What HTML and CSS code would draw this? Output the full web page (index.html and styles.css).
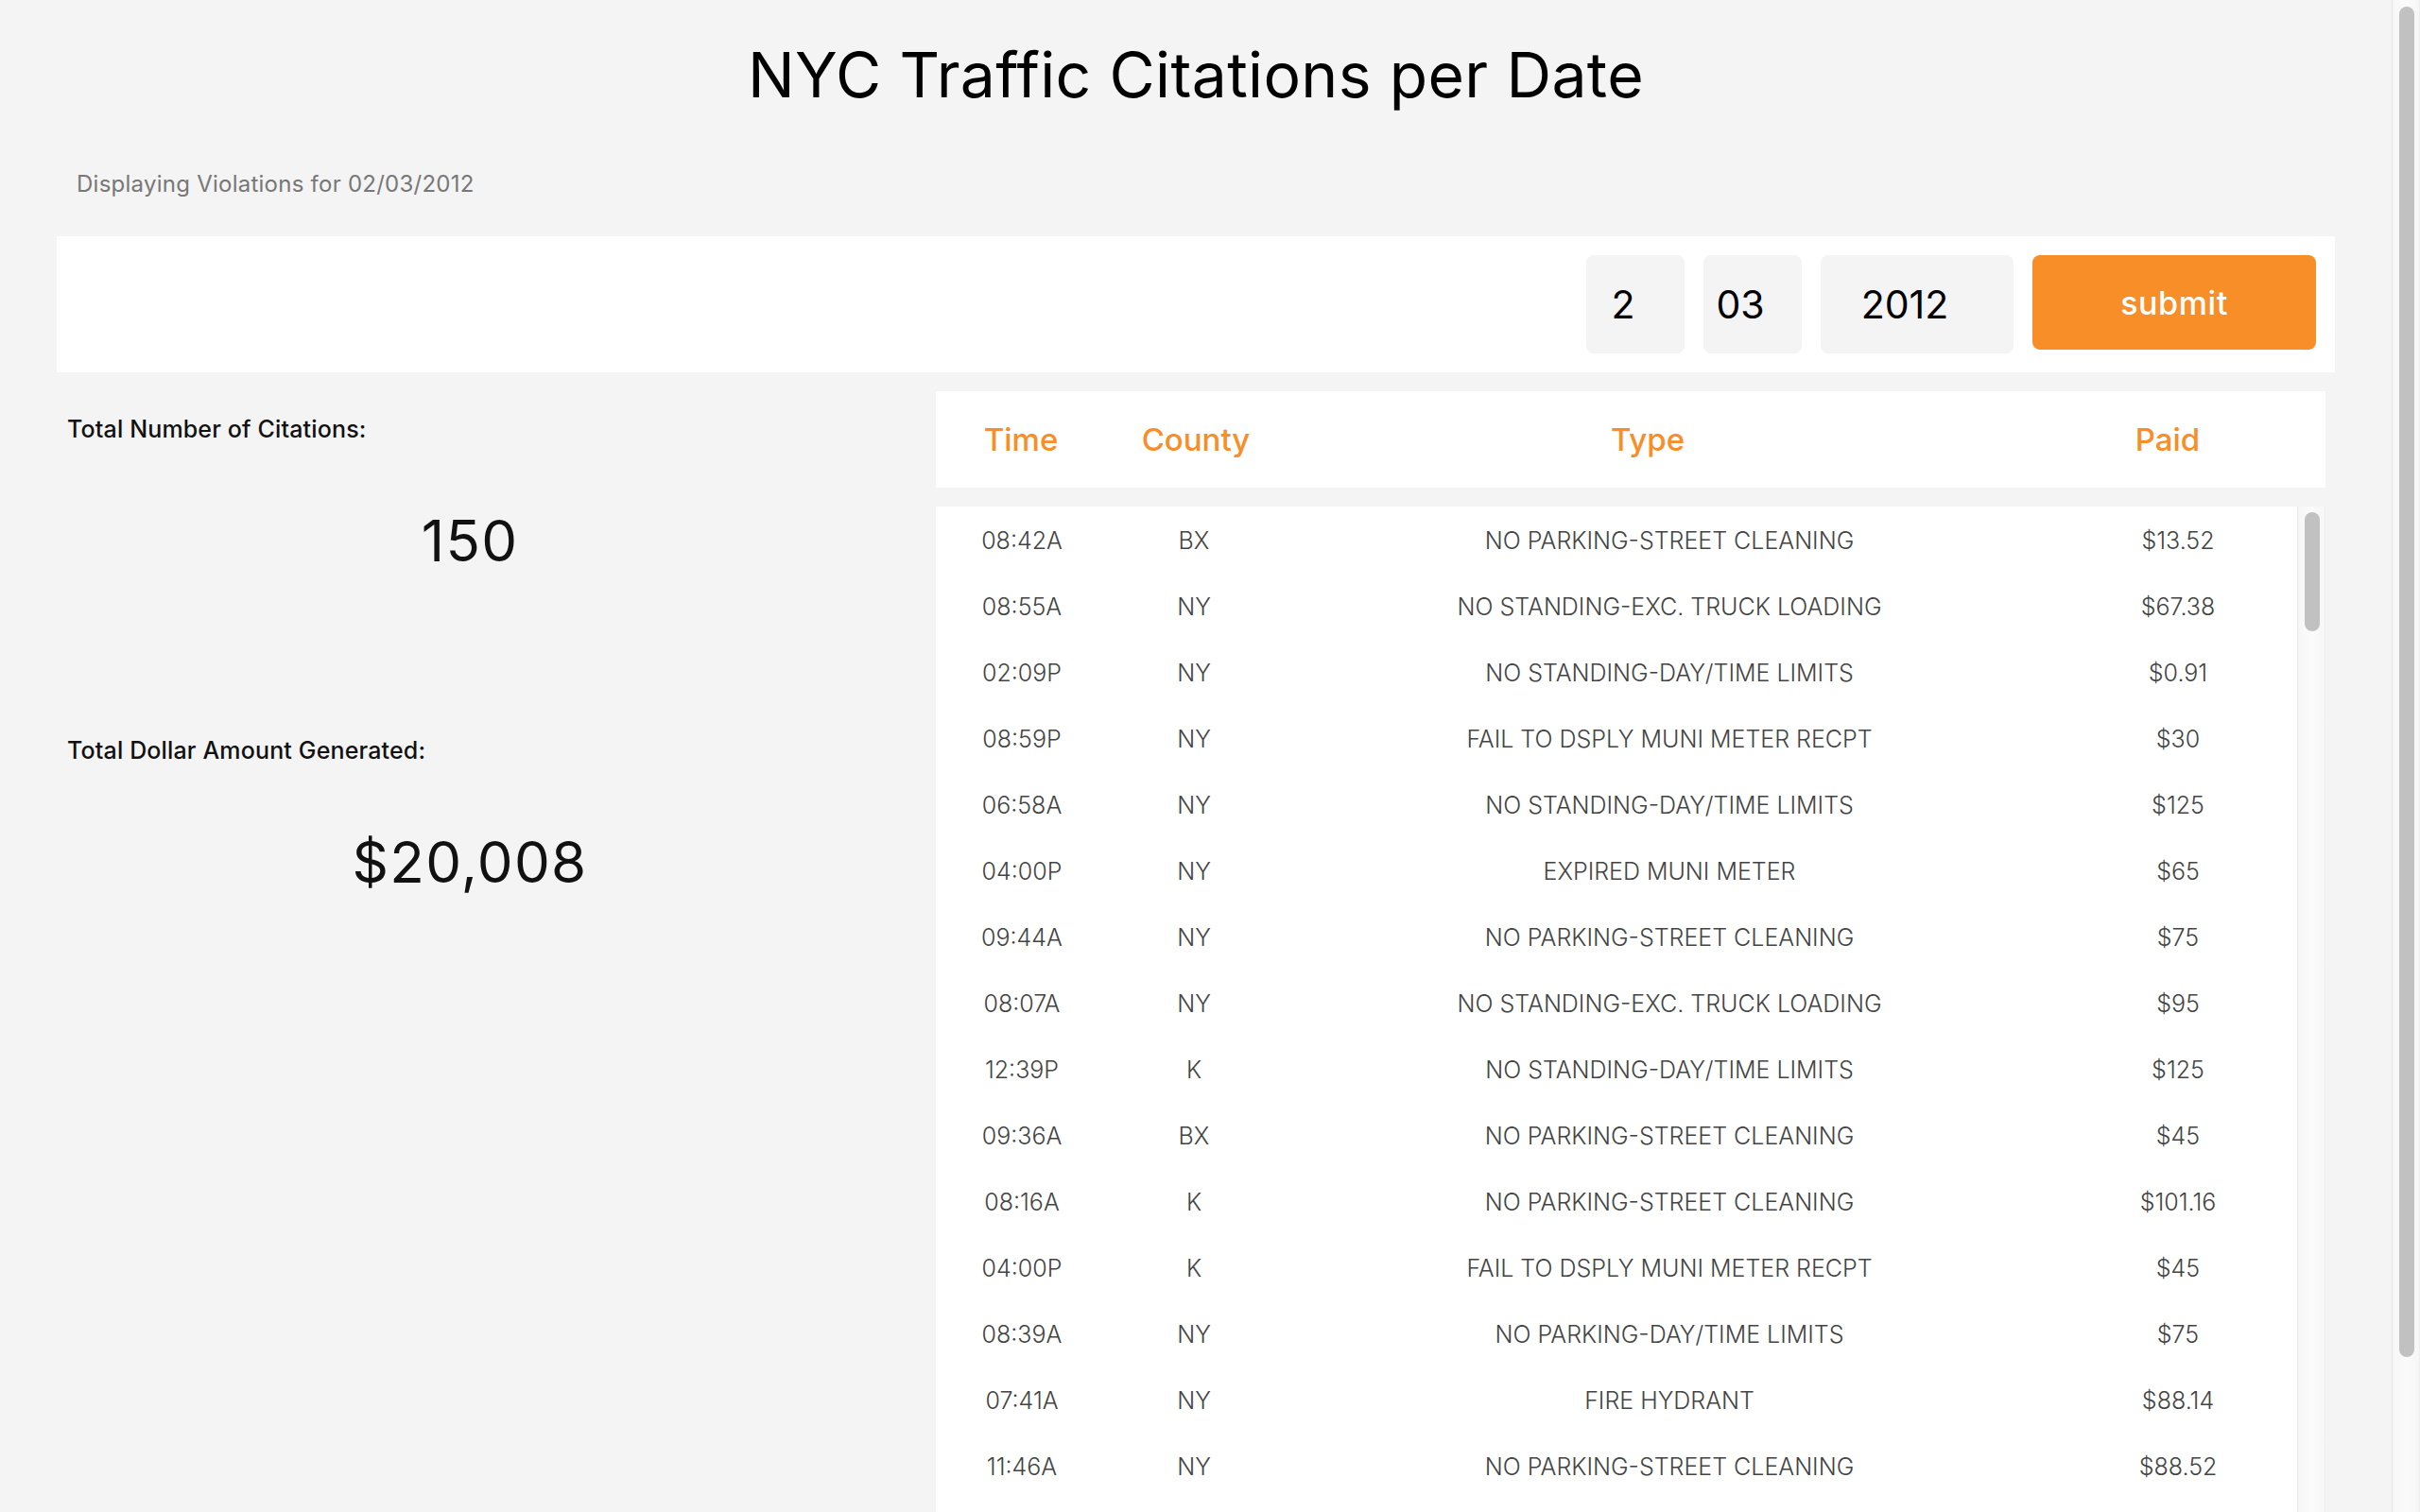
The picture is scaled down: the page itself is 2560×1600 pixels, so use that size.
FILE: index.html
```html
<!DOCTYPE html>
<html lang="en">
<head>
<meta charset="utf-8">
<title>NYC Traffic Citations per Date</title>
<link rel="stylesheet" href="styles.css">
</head>
<body>
<div class="page">
  <h1 class="title">NYC Traffic Citations per Date</h1>
  <p class="subtitle">Displaying Violations for 02/03/2012</p>

  <form class="search-bar">
    <input class="date-input date-month" type="text" value="2">
    <input class="date-input date-day" type="text" value="03">
    <input class="date-input date-year" type="text" value="2012">
    <button class="submit-btn" type="button">submit</button>
  </form>

  <div class="main">
    <div class="stats">
      <div class="stat">
        <div class="stat-label">Total Number of Citations:</div>
        <div class="stat-value">150</div>
      </div>
      <div class="stat">
        <div class="stat-label">Total Dollar Amount Generated:</div>
        <div class="stat-value">$20,008</div>
      </div>
    </div>

    <div class="citations">
      <table class="head-table">
        <colgroup><col class="hc1"><col class="hc2"><col class="hc3"><col class="hc4"></colgroup>
        <tr><th>Time</th><th>County</th><th>Type</th><th>Paid</th></tr>
      </table>

      <div class="body-wrap">
        <div class="body-scroll">
          <table class="body-table">
            <colgroup><col class="bc1"><col class="bc2"><col class="bc3"><col class="bc4"></colgroup>
            <tr><td>08:42A</td><td>BX</td><td>NO PARKING-STREET CLEANING</td><td>$13.52</td></tr>
            <tr><td>08:55A</td><td>NY</td><td>NO STANDING-EXC. TRUCK LOADING</td><td>$67.38</td></tr>
            <tr><td>02:09P</td><td>NY</td><td>NO STANDING-DAY/TIME LIMITS</td><td>$0.91</td></tr>
            <tr><td>08:59P</td><td>NY</td><td>FAIL TO DSPLY MUNI METER RECPT</td><td>$30</td></tr>
            <tr><td>06:58A</td><td>NY</td><td>NO STANDING-DAY/TIME LIMITS</td><td>$125</td></tr>
            <tr><td>04:00P</td><td>NY</td><td>EXPIRED MUNI METER</td><td>$65</td></tr>
            <tr><td>09:44A</td><td>NY</td><td>NO PARKING-STREET CLEANING</td><td>$75</td></tr>
            <tr><td>08:07A</td><td>NY</td><td>NO STANDING-EXC. TRUCK LOADING</td><td>$95</td></tr>
            <tr><td>12:39P</td><td>K</td><td>NO STANDING-DAY/TIME LIMITS</td><td>$125</td></tr>
            <tr><td>09:36A</td><td>BX</td><td>NO PARKING-STREET CLEANING</td><td>$45</td></tr>
            <tr><td>08:16A</td><td>K</td><td>NO PARKING-STREET CLEANING</td><td>$101.16</td></tr>
            <tr><td>04:00P</td><td>K</td><td>FAIL TO DSPLY MUNI METER RECPT</td><td>$45</td></tr>
            <tr><td>08:39A</td><td>NY</td><td>NO PARKING-DAY/TIME LIMITS</td><td>$75</td></tr>
            <tr><td>07:41A</td><td>NY</td><td>FIRE HYDRANT</td><td>$88.14</td></tr>
            <tr><td>11:46A</td><td>NY</td><td>NO PARKING-STREET CLEANING</td><td>$88.52</td></tr>
          </table>
        </div>
        <div class="rail table-rail"><div class="thumb table-thumb"></div></div>
      </div>
    </div>
  </div>
</div>
<div class="rail page-rail"><div class="thumb page-thumb"></div></div>
</body>
</html>
```
FILE: styles.css
```css
html, body {
  margin: 0;
  height: 1600px;
  overflow: hidden;
}

body {
  display: flex;
  background: #f4f4f4;
  font-family: "Inter", "Noto Sans", sans-serif;
  color: #000;
}

.page {
  flex: 1;
  min-width: 0;
  padding: 0 60px;
}

.title {
  margin: 39px 0 0;
  font-size: 66px;
  line-height: 80px;
  font-weight: 400;
  letter-spacing: 0.35px;
  text-align: center;
}

.subtitle {
  margin: 61px 0 0;
  padding-left: 21px;
  font-size: 24px;
  line-height: 30px;
  letter-spacing: 0.25px;
  color: #777;
}

.search-bar {
  margin: 40px 0 0;
  height: 144px;
  box-sizing: border-box;
  padding: 20px;
  background: #fff;
  display: flex;
  justify-content: flex-end;
  align-items: flex-start;
  gap: 20px;
}

.date-input {
  box-sizing: border-box;
  height: 104px;
  width: 104px;
  margin: 0;
  padding: 0 26px 0 0;
  border: none;
  border-radius: 8px;
  background: #f4f4f4;
  font-family: inherit;
  font-size: 41px;
  font-weight: 400;
  color: #000;
  text-align: center;
  outline: none;
}

.date-year {
  width: 204px;
}

.submit-btn {
  width: 300px;
  height: 100px;
  margin: 0;
  border: none;
  border-radius: 8px;
  background: #f88e28;
  color: #fff;
  font-family: inherit;
  font-size: 34px;
  font-weight: 500;
  letter-spacing: 0.6px;
  padding: 0;
}

.main {
  margin-top: 20px;
  display: flex;
  align-items: flex-start;
}

.stats {
  width: 874px;
  flex: none;
  box-sizing: border-box;
  padding: 0 11px;
  margin-right: 56px;
}

.stat {
  height: 340px;
}

.stat-label {
  padding-top: 25px;
  font-size: 25px;
  line-height: 30px;
  font-weight: 500;
  letter-spacing: 0.15px;
  color: #111;
}

.stat-value {
  margin-top: 67px;
  font-size: 60px;
  line-height: 72px;
  font-weight: 400;
  letter-spacing: 1.3px;
  text-align: center;
  color: #111;
}

.citations {
  width: 1470px;
  flex: none;
}

table {
  border-collapse: collapse;
  table-layout: fixed;
}

.head-table {
  width: 1470px;
  background: #fff;
}

.head-table th {
  height: 102px;
  padding: 0;
  font-size: 33px;
  font-weight: 500;
  color: #f88e28;
  text-align: center;
  vertical-align: middle;
}

.hc1 { width: 180px; }
.hc2 { width: 190px; }
.hc3 { width: 766px; }
.hc4 { width: 334px; }

.body-wrap {
  margin-top: 20px;
  height: 1100px;
  display: flex;
  background: #fff;
}

.body-scroll {
  width: 1440px;
  flex: none;
  overflow: hidden;
}

.body-table {
  width: 1440px;
  margin-top: 1px;
}

.body-table td {
  height: 70px;
  padding: 0;
  font-size: 25px;
  font-weight: 300;
  color: #444;
  text-align: center;
  vertical-align: middle;
  white-space: nowrap;
}

.bc1 { width: 182px; }
.bc2 { width: 182px; }
.bc3 { width: 824px; }
.bc4 { width: 252px; }

.rail {
  width: 30px;
  flex: none;
  box-sizing: border-box;
  background: linear-gradient(to right, #f6f6f6, #fbfbfb 50%, #f6f6f6);
  border-left: 1px solid #e6e6e6;
  border-right: 1px solid #efefef;
  padding-left: 7px;
}

.page-rail {
  height: 1600px;
  padding-top: 7px;
}

.table-rail {
  padding-top: 6px;
}

.thumb {
  width: 16px;
  border-radius: 8px;
  background: #c1c1c1;
}

.page-thumb {
  height: 1429px;
}

.table-thumb {
  height: 126px;
}
```
